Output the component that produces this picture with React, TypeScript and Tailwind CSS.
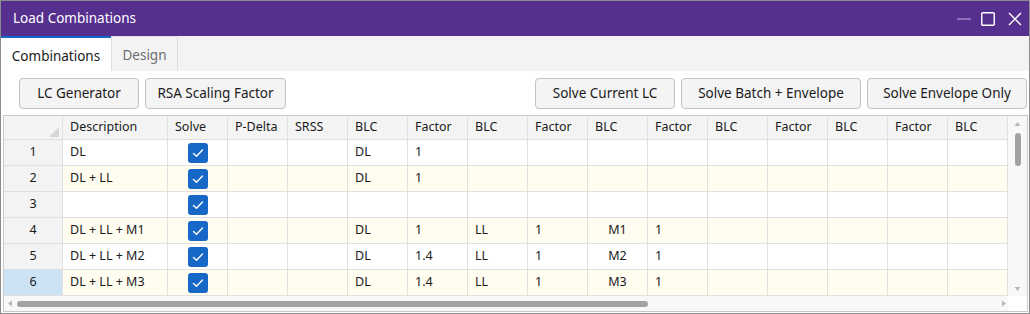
import React from "react";

type Row = {
    n: number;
    desc: string;
    cells: string[];
};

const rows: Row[] = [
    { n: 1, desc: "DL", cells: ["DL", "1"] },
    { n: 2, desc: "DL + LL", cells: ["DL", "1"] },
    { n: 3, desc: "", cells: [] },
    { n: 4, desc: "DL + LL + M1", cells: ["DL", "1", "LL", "1", "M1", "1"] },
    { n: 5, desc: "DL + LL + M2", cells: ["DL", "1.4", "LL", "1", "M2", "1"] },
    { n: 6, desc: "DL + LL + M3", cells: ["DL", "1.4", "LL", "1", "M3", "1"] },
];

const blcHeaders = ["BLC", "Factor", "BLC", "Factor", "BLC", "Factor", "BLC", "Factor", "BLC", "Factor", "BLC"];

function Checkbox() {
    return (
        <div className="flex h-[20px] w-[20px] items-center justify-center rounded-[3px] bg-[#1767c6]">
            <svg viewBox="0 0 20 20" className="h-[20px] w-[20px]" fill="none" stroke="white" strokeWidth="1.4" strokeLinecap="round" strokeLinejoin="round">
                <path d="M5.5 10.5l3 2.8 6-6.3" />
            </svg>
        </div>
    );
}

function Btn({ label, w }: { label: string; w: string }) {
    return (
        <button className={`${w} h-[31px] rounded-[4px] border border-[#c2c2c2] bg-[#f4f4f4] text-[13.5px] text-[#1b1b1b]`}>
            {label}
        </button>
    );
}

export default function App() {
    return (
        <div
            className="flex h-[314px] w-[1030px] flex-col overflow-hidden border border-[#8c8c8c] bg-white"
            style={{ fontFamily: '"Noto Sans", "Open Sans", sans-serif' }}
        >
            {/* title bar */}
            <div className="flex h-[35px] shrink-0 items-center justify-between bg-[#56308f] pl-[12px] pr-[7px]">
                <span className="text-[13.5px] text-white">Load Combinations</span>
                <div className="flex items-center gap-[10px]">
                    <svg width="14" height="14" viewBox="0 0 14 14">
                        <path d="M0 7h14" stroke="#9f88c9" strokeWidth="1.5" />
                    </svg>
                    <svg width="14" height="14" viewBox="0 0 14 14">
                        <rect x="0.75" y="0.75" width="12.5" height="12.5" rx="1" fill="none" stroke="white" strokeWidth="1.4" />
                    </svg>
                    <svg width="14" height="14" viewBox="0 0 14 14" className="ml-[3px]">
                        <path d="M1 1l12 12M13 1L1 13" stroke="white" strokeWidth="1.4" />
                    </svg>
                </div>
            </div>

            {/* tabs */}
            <div className="flex h-[35px] shrink-0 bg-[#f3f3f3]">
                <div className="flex w-[110px] items-center justify-center border-t-2 border-[#1467c2] bg-white pt-[3px] text-[13.5px] text-[#1b1b1b]">
                    Combinations
                </div>
                <div className="flex w-[67px] items-center justify-center border-x border-t border-[#dedede] bg-[#f3f3f3] pt-[3px] text-[13.5px] text-[#6e6e6e]">
                    Design
                </div>
            </div>

            {/* buttons */}
            <div className="flex shrink-0 items-center justify-between pl-[18px] pr-[2px] pt-[7px] pb-[6px]">
                <div className="flex gap-[6px]">
                    <Btn label="LC Generator" w="w-[120px]" />
                    <Btn label="RSA Scaling Factor" w="w-[141px]" />
                </div>
                <div className="flex gap-[6px]">
                    <Btn label="Solve Current LC" w="w-[140px]" />
                    <Btn label="Solve Batch + Envelope" w="w-[180px]" />
                    <Btn label="Solve Envelope Only" w="w-[160px]" />
                </div>
            </div>

            {/* grid */}
            <div className="ml-[2px] mr-[1px] flex h-[197px] border border-[#c8c8c8] text-[12.5px] text-[#1b1b1b]">
                <div className="flex w-[1004px] flex-col">
                    <div className="flex h-[24px] border-b border-[#e0e0e0] bg-[#f4f4f4]">
                        <div className="relative w-[59px] border-r border-[#e0e0e0]">
                            <svg width="10" height="10" viewBox="0 0 10 10" className="absolute bottom-[2px] right-[3px]">
                                <path d="M10 0L10 10L0 10Z" fill="#d6d6d6" />
                            </svg>
                        </div>
                        <div className="flex w-[105px] items-center border-r border-[#e0e0e0] pl-[7px]">Description</div>
                        <div className="flex w-[60px] items-center border-r border-[#e0e0e0] pl-[7px]">Solve</div>
                        <div className="flex w-[60px] items-center border-r border-[#e0e0e0] pl-[7px]">P-Delta</div>
                        <div className="flex w-[60px] items-center border-r border-[#e0e0e0] pl-[7px]">SRSS</div>
                        {blcHeaders.map((h, i) => (
                            <div key={i} className="flex w-[60px] items-center border-r border-[#e0e0e0] pl-[7px]">
                                {h}
                            </div>
                        ))}
                    </div>
                    {rows.map((r) => {
                        const bg = r.n % 2 === 0 ? "bg-[#fffcf0]" : "bg-white";
                        return (
                            <div key={r.n} className={`flex h-[26px] border-b border-[#e0e0e0] ${bg}`}>
                                <div
                                    className={`flex w-[59px] items-center justify-center border-r border-[#e0e0e0] ${
                                        r.n === 6 ? "bg-[#cce3f6]" : "bg-[#f3f3f3]"
                                    }`}
                                >
                                    {r.n}
                                </div>
                                <div className="flex w-[105px] items-center border-r border-[#e0e0e0] pl-[7px]">{r.desc}</div>
                                <div className="flex w-[60px] items-center justify-center border-r border-[#e0e0e0]">
                                    <Checkbox />
                                </div>
                                <div className="w-[60px] border-r border-[#e0e0e0]" />
                                <div className="w-[60px] border-r border-[#e0e0e0]" />
                                {blcHeaders.map((_, i) => {
                                    const v = r.cells[i] ?? "";
                                    const centered = v.startsWith("M");
                                    return (
                                        <div
                                            key={i}
                                            className={`flex w-[60px] items-center border-r border-[#e0e0e0] ${
                                                centered ? "justify-center" : "pl-[7px]"
                                            }`}
                                        >
                                            {v}
                                        </div>
                                    );
                                })}
                            </div>
                        );
                    })}
                    {/* horizontal scrollbar */}
                    <div className="flex h-[15px] items-center bg-[#f8f8f8] pl-[3px] pr-[1px]">
                        <svg width="6" height="7" viewBox="0 0 6 7">
                            <path d="M1 3.5L5 0.5V6.5Z" fill="#b8b8b8" />
                        </svg>
                        <div className="ml-[4px] h-[6px] w-[631px] rounded-full bg-[#a3a3a3]" />
                        <div className="flex-1" />
                        <svg width="6" height="7" viewBox="0 0 6 7">
                            <path d="M5 3.5L1 0.5V6.5Z" fill="#b8b8b8" />
                        </svg>
                    </div>
                </div>
                {/* vertical scrollbar */}
                <div className="flex w-[19px] flex-col">
                    <div className="flex h-[180px] flex-col items-center bg-[#f8f8f8] pt-[5px]">
                        <svg width="7" height="6" viewBox="0 0 7 6">
                            <path d="M3.5 1L6.5 5H0.5Z" fill="#b8b8b8" />
                        </svg>
                        <div className="mt-[6px] h-[33px] w-[6px] rounded-full bg-[#a3a3a3]" />
                        <div className="flex-1" />
                        <svg width="7" height="6" viewBox="0 0 7 6" className="mb-[4px]">
                            <path d="M3.5 5L6.5 1H0.5Z" fill="#b8b8b8" />
                        </svg>
                    </div>
                    <div className="flex-1 bg-white" />
                </div>
            </div>
        </div>
    );
}
